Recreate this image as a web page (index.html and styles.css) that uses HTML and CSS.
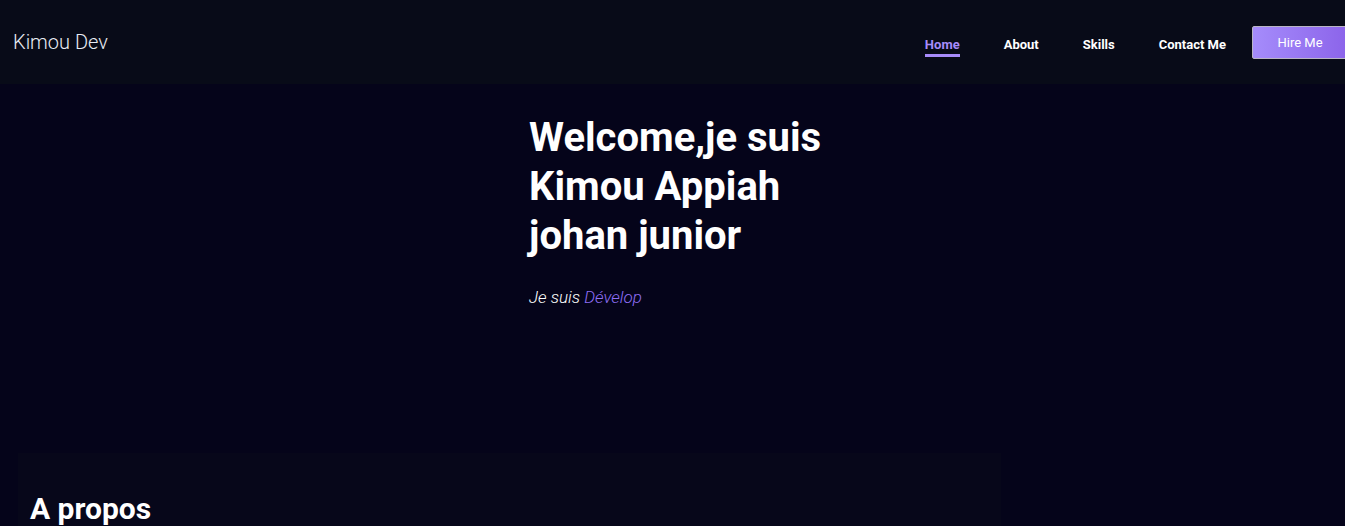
FILE: index.html
```html
<!DOCTYPE html>
<html lang="fr">
<head>
<meta charset="utf-8">
<title>Kimou Dev</title>
<link rel="stylesheet" href="styles.css">
</head>
<body>
<header class="navbar">
  <a class="logo" href="#">Kimou Dev</a>
  <nav class="nav">
    <a class="nav-link active" href="#">Home</a>
    <a class="nav-link" href="#">About</a>
    <a class="nav-link" href="#">Skills</a>
    <a class="nav-link" href="#">Contact Me</a>
    <a class="hire-btn" href="#">Hire Me</a>
  </nav>
</header>
<main>
  <section class="hero">
    <div class="hero-text">
      <h1 class="hero-title">Welcome,je suis<br>Kimou Appiah<br>johan junior</h1>
      <p class="hero-sub">Je suis <span class="typed">Dévelop</span></p>
    </div>
  </section>
  <section class="about">
    <h2 class="about-title">A propos</h2>
  </section>
</main>
</body>
</html>
```
FILE: styles.css
```css
* { box-sizing: border-box; }
html, body { margin: 0; padding: 0; }
body {
  background: #05041a;
  color: #ffffff;
  font-family: Roboto, "Liberation Sans", Arial, sans-serif;
  overflow: hidden;
}
a { text-decoration: none; color: inherit; }

.navbar {
  height: 84px;
  background: #080b18;
  display: flex;
  align-items: center;
  justify-content: space-between;
  padding-left: 13px;
}
.logo {
  font-weight: 300;
  font-size: 20px;
  color: #e8ecf4;
}
.nav {
  display: flex;
  align-items: center;
}
.nav-link {
  font-weight: 700;
  font-size: 13px;
  color: #ffffff;
  margin-right: 44px;
  padding-bottom: 2px;
  border-bottom: 3px solid transparent;
  margin-top: 10px;
}
.nav-link:nth-child(4) { margin-right: 26px; }
.nav-link.active {
  color: #a78bfa;
  border-bottom-color: #a78bfa;
}
.hire-btn {
  display: flex;
  align-items: center;
  justify-content: center;
  width: 96px;
  height: 33px;
  margin-right: -3px;
  font-size: 13px;
  color: #ffffff;
  background: linear-gradient(90deg, #a58cfb 0%, #8c64ea 100%);
  border: 1px solid #b9b5c4;
  border-radius: 2px;
  margin-top: 1px;
}

.hero {
  height: 369px;
  display: flex;
  justify-content: center;
  padding-top: 29px;
}
.hero-text { width: 300px; margin-left: 13px; }
.hero-title {
  margin: 0;
  font-weight: 700;
  font-size: 40px;
  line-height: 49px;
  white-space: nowrap;
}
.hero-sub {
  margin: 27px 0 0;
  font-style: italic;
  font-weight: 300;
  font-size: 17px;
  color: #ffffff;
}
.typed { color: #8f6ff6; }

.about {
  margin-left: 18px;
  width: 983px;
  background: #07071a;
  padding: 38px 12px 0;
  min-height: 200px;
}
.about-title {
  margin: 0;
  font-size: 30px;
  font-weight: 700;
}
```
